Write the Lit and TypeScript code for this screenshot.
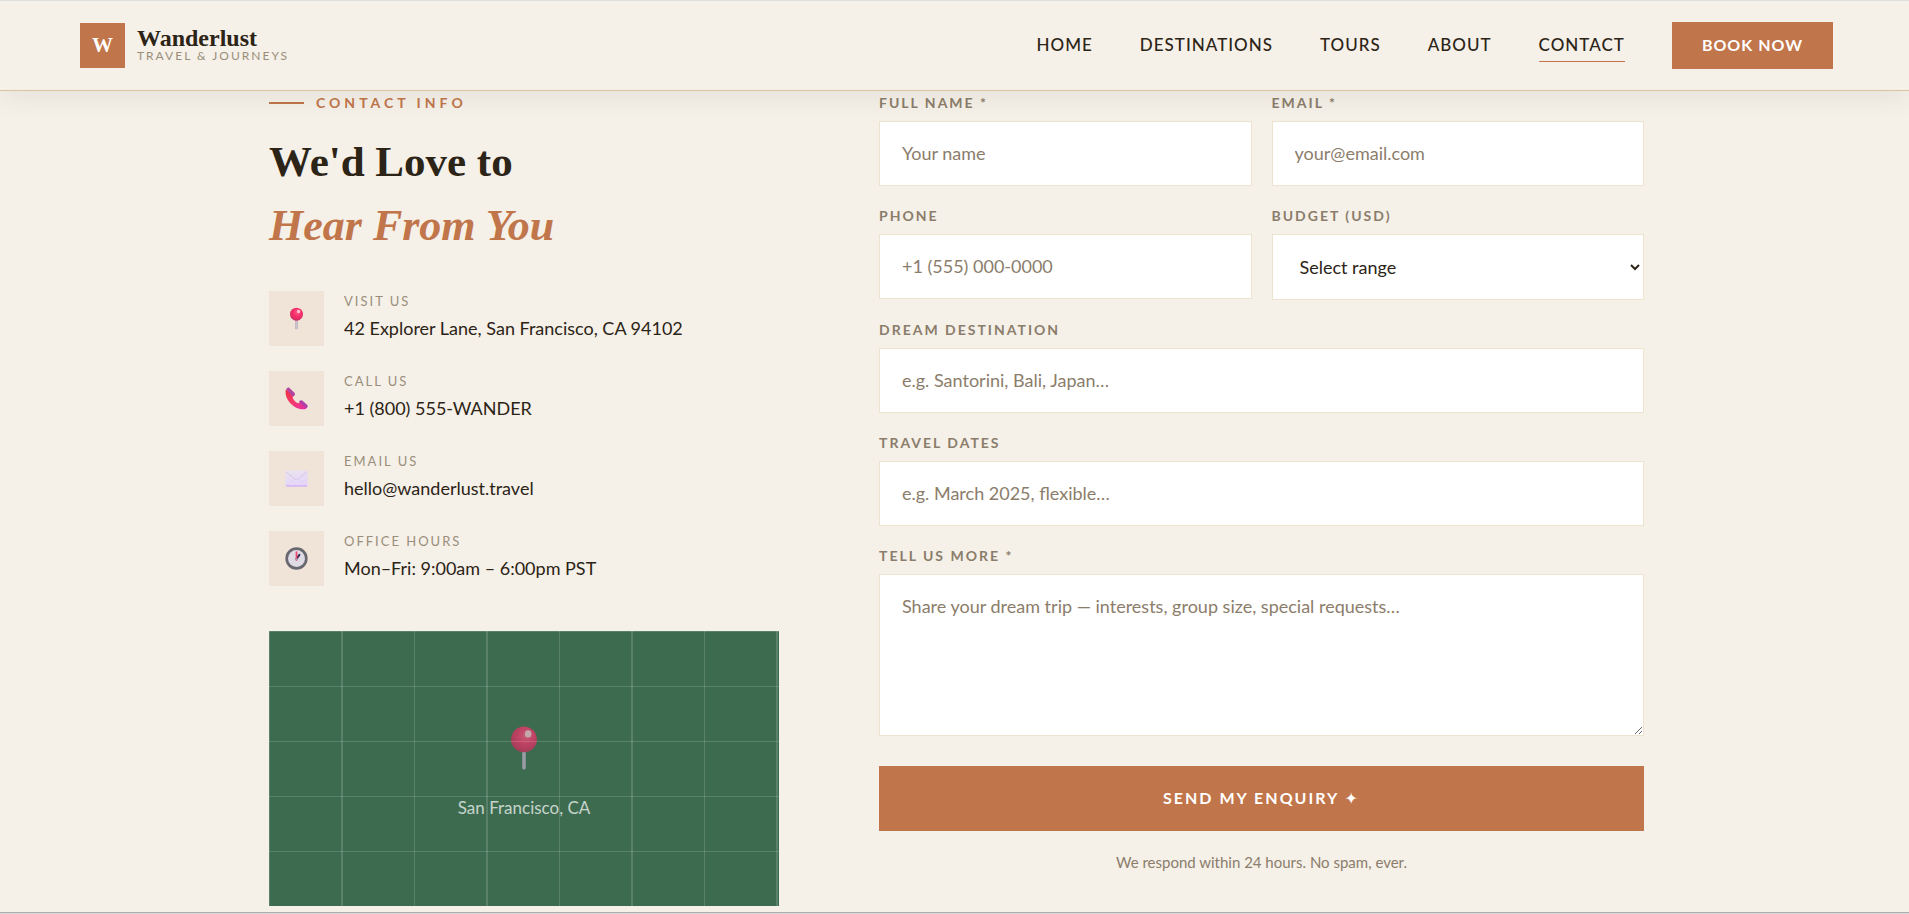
import { LitElement, html, css, svg } from "lit";
import { customElement } from "lit/decorators.js";

const pin = svg`
  <defs>
    <radialGradient id="ball" cx="0.58" cy="0.35" r="0.7">
      <stop offset="0" stop-color="#ff5a86"></stop>
      <stop offset="0.45" stop-color="#f8316c"></stop>
      <stop offset="1" stop-color="#c92a5c"></stop>
    </radialGradient>
    <linearGradient id="needle" x1="0" x2="1" y1="0" y2="0">
      <stop offset="0" stop-color="#9a90a6"></stop>
      <stop offset="0.5" stop-color="#c9c3d3"></stop>
      <stop offset="1" stop-color="#998fa5"></stop>
    </linearGradient>
  </defs>
  <rect x="14.6" y="16" width="2.8" height="15" rx="1.2" fill="url(#needle)"></rect>
  <circle cx="16" cy="10" r="9" fill="url(#ball)"></circle>
  <ellipse cx="18.9" cy="6.2" rx="2.3" ry="2.5" fill="#ffd0dc" opacity="0.9"></ellipse>`;

const phone = svg`
  <defs>
    <linearGradient id="handset" x1="0" y1="0" x2="1" y2="1">
      <stop offset="0" stop-color="#f02d3f"></stop>
      <stop offset="0.5" stop-color="#f33a6c"></stop>
      <stop offset="1" stop-color="#e62cae"></stop>
    </linearGradient>
  </defs>
  <path d="M1.200 3.500C.2 8.500 1 15 6.500 21.500C12.500 28.500 21 32.500 29 30.500L31 27.500L22 20L18.500 22.500C15 21.500 11.500 18 10.500 14.500L12.500 11Z" fill="url(#handset)"></path>
  <path d="M1.600 3.200Q3 0 5.500 .8L13.500 8.500Q15 11 12.500 12.500Q10.500 13.500 9.500 12Z" fill="#b344a0"></path>
  <path d="M19.500 20.500Q21 17.500 24 18.800L31 25Q32.500 27 30.500 29Q28.500 29.800 27.500 28Z" fill="#b03fa8"></path>`;

const envelope = svg`
  <defs>
    <linearGradient id="paper" x1="0" y1="0" x2="0.3" y2="1">
      <stop offset="0" stop-color="#e9e4ee"></stop>
      <stop offset="1" stop-color="#e6d5fa"></stop>
    </linearGradient>
  </defs>
  <rect x="0.500" y="5" width="31" height="22" rx="1.800" fill="url(#paper)"></rect>
  <path d="M1 26L13.500 16.500M31 26L18.500 16.500" stroke="#dccff0" stroke-width="1" fill="none"></path>
  <path d="M1 6.500L14 17Q16 18.500 18 17L31 6.500" stroke="#d2c5e4" stroke-width="1.200" fill="none"></path>
  <path d="M1.500 26.400H30.500" stroke="#ccaaf4" stroke-width="1.600"></path>`;

const clock = svg`
  <circle cx="16" cy="16" r="15.500" fill="#68666f"></circle>
  <circle cx="16" cy="16" r="11.800" fill="#dedbe4"></circle>
  <path d="M16 16.500L20 11" stroke="#342b52" stroke-width="2.800" stroke-linecap="round"></path>
  <path d="M16 18V7" stroke="#f0456e" stroke-width="2.400" stroke-linecap="round"></path>
  <circle cx="16" cy="17" r="1.500" fill="#a9a2b4"></circle>`;

const contacts = [
  { icon: pin, label: "Visit Us", value: "42 Explorer Lane, San Francisco, CA 94102" },
  { icon: phone, label: "Call Us", value: "+1 (800) 555-WANDER" },
  { icon: envelope, label: "Email Us", value: "hello@wanderlust.travel" },
  { icon: clock, label: "Office Hours", value: "Mon–Fri: 9:00am – 6:00pm PST" },
];

@customElement("site-header")
export class SiteHeader extends LitElement {
  static styles = css`
    :host {
      display: block;
      position: sticky;
      top: 0;
      z-index: 1;
    }
    .bar {
      display: flex;
      align-items: center;
      justify-content: space-between;
      height: 89px;
      padding: 0 76px 0 80px;
      background: #f5f0e8;
      border-top: 1px solid #dfe0dc;
      border-bottom: 1px solid #d4c5a0;
      box-shadow: 0 4px 32px rgba(44, 36, 22, 0.08);
    }
    .brand {
      display: flex;
      align-items: center;
      gap: 12px;
      color: #2c2416;
      text-decoration: none;
    }
    .mark {
      display: grid;
      place-items: center;
      width: 45px;
      height: 45px;
      background: #c1754a;
      color: #fff;
      font: 700 21px/1 "Liberation Serif", serif;
    }
    .names {
      display: flex;
      flex-direction: column;
    }
    .name {
      font: 700 24px/20px "Liberation Serif", serif;
    }
    .tag {
      color: #9a8e7b;
      font-size: 12px;
      line-height: 16px;
      letter-spacing: 2px;
      text-transform: uppercase;
    }
    .nav {
      display: flex;
      align-items: center;
      gap: 47px;
    }
    .link {
      padding: 4px 0;
      border-bottom: 1px solid transparent;
      color: #2c2416;
      font-size: 17px;
      font-weight: 500;
      line-height: 24px;
      letter-spacing: 1px;
      text-decoration: none;
      text-transform: uppercase;
    }
    .current {
      border-bottom-color: #c1754a;
    }
    .book {
      height: 47px;
      padding: 0 30px 2px;
      border: 0;
      background: #c1754a;
      color: #fff;
      font: inherit;
      font-size: 16px;
      font-weight: 700;
      letter-spacing: 1px;
      text-transform: uppercase;
    }
  `;

  render() {
    return html`
      <header class="bar">
        <a class="brand" href="#home">
          <span class="mark">W</span>
          <span class="names">
            <span class="name">Wanderlust</span>
            <span class="tag">Travel &amp; Journeys</span>
          </span>
        </a>
        <nav class="nav" aria-label="Main">
          <a class="link" href="#home">Home</a>
          <a class="link" href="#destinations">Destinations</a>
          <a class="link" href="#tours">Tours</a>
          <a class="link" href="#about">About</a>
          <a class="link current" href="#contact" aria-current="page">Contact</a>
          <button class="book" type="button">Book Now</button>
        </nav>
      </header>
    `;
  }
}

@customElement("contact-info")
export class ContactInfo extends LitElement {
  static styles = css`
    :host {
      display: block;
    }
    .eyebrow {
      display: flex;
      align-items: center;
      gap: 12px;
      margin: 0;
      color: #c1754a;
      font-size: 14px;
      font-weight: 700;
      line-height: 20px;
      letter-spacing: 4px;
      text-transform: uppercase;
    }
    .rule {
      width: 35px;
      height: 2px;
      background: #c1754a;
    }
    .title {
      margin: 17px 0 33px;
      color: #2c2416;
      font: 700 43px/64px "Liberation Serif", serif;
    }
    .accent {
      display: block;
      color: #c1754a;
      font-size: 44px;
    }
    .list {
      display: grid;
      gap: 25px;
      margin: 0 0 45px;
      padding: 0;
      list-style: none;
    }
    .item {
      display: flex;
      gap: 20px;
    }
    .tile {
      display: grid;
      place-items: center;
      width: 55px;
      height: 55px;
      background: #f0e4d8;
    }
    .glyph {
      width: 23px;
      height: 23px;
    }
    .text {
      display: flex;
      flex-direction: column;
      gap: 4px;
    }
    .label {
      color: #9a8e7b;
      font-size: 13px;
      line-height: 20px;
      letter-spacing: 2px;
      text-transform: uppercase;
    }
    .value {
      color: #2c2416;
      font-size: 18px;
      line-height: 26px;
    }
    .map {
      position: relative;
      display: flex;
      flex-direction: column;
      align-items: center;
      justify-content: center;
      gap: 24px;
      box-sizing: border-box;
      height: 275px;
      padding-top: 9px;
      background: #3d6b4f;
      color: #fff;
    }
    .map::after {
      content: "";
      position: absolute;
      inset: 0;
      background:
        repeating-linear-gradient(90deg, #ffffff26 0 1px, transparent 1px 72px, #ffffff26 72px 74px, transparent 74px 145px),
        repeating-linear-gradient(#ffffff26 0 1px, transparent 1px 55px);
    }
    .marker {
      width: 46px;
      height: 46px;
      opacity: 0.7;
    }
    .place {
      font-size: 17px;
      line-height: 26px;
      opacity: 0.7;
    }
  `;

  render() {
    return html`
      <p class="eyebrow"><span class="rule"></span>Contact Info</p>
      <h2 class="title">We'd Love to <em class="accent">Hear From You</em></h2>
      <ul class="list">
        ${contacts.map(
          (c) => html`
            <li class="item">
              <span class="tile"><svg class="glyph" viewBox="0 0 32 32" aria-hidden="true">${c.icon}</svg></span>
              <span class="text">
                <span class="label">${c.label}</span>
                <span class="value">${c.value}</span>
              </span>
            </li>
          `
        )}
      </ul>
      <div class="map">
        <svg class="marker" viewBox="0 0 32 32" aria-hidden="true">${pin}</svg>
        <span class="place">San Francisco, CA</span>
      </div>
    `;
  }
}

@customElement("enquiry-form")
export class EnquiryForm extends LitElement {
  static styles = css`
    :host {
      display: block;
    }
    .form {
      display: grid;
      gap: 20px;
    }
    .pair {
      display: grid;
      grid-template-columns: 1fr 1fr;
      align-items: start;
      gap: 20px;
    }
    .field {
      display: grid;
      gap: 8px;
    }
    .label {
      color: #8b7d6b;
      font-size: 14px;
      font-weight: 700;
      line-height: 20px;
      letter-spacing: 2px;
      text-transform: uppercase;
    }
    .control {
      box-sizing: border-box;
      width: 100%;
      height: 65px;
      margin: 0;
      padding: 0 22px 2px;
      border: 1px solid #ede4d0;
      border-radius: 0;
      background: #fff;
      color: #2c2416;
      font: inherit;
      font-size: 18px;
      outline: none;
    }
    .control::placeholder {
      color: #8b7d6b;
      opacity: 1;
    }
    .select {
      height: 66px;
      padding: 0 0 0 23px;
    }
    .area {
      display: block;
      height: 162px;
      padding: 18px 22px;
      line-height: 26px;
      resize: vertical;
    }
    .send {
      height: 65px;
      margin-top: 10px;
      padding: 0 22px 2px;
      border: 0;
      background: #c1754a;
      color: #fff;
      font: inherit;
      font-size: 16px;
      font-weight: 700;
      letter-spacing: 2px;
      text-transform: uppercase;
    }
    .note {
      margin: 0;
      color: #8b7d6b;
      font-size: 15px;
      line-height: 22px;
      text-align: center;
    }
  `;

  render() {
    return html`
      <form class="form">
        <div class="pair">
          <div class="field">
            <label class="label" for="name">Full Name *</label>
            <input class="control" id="name" type="text" placeholder="Your name" />
          </div>
          <div class="field">
            <label class="label" for="email">Email *</label>
            <input class="control" id="email" type="email" placeholder="your@email.com" />
          </div>
        </div>
        <div class="pair">
          <div class="field">
            <label class="label" for="phone">Phone</label>
            <input class="control" id="phone" type="tel" placeholder="+1 (555) 000-0000" />
          </div>
          <div class="field">
            <label class="label" for="budget">Budget (USD)</label>
            <select class="control select" id="budget">
              <option>Select range</option>
            </select>
          </div>
        </div>
        <div class="field">
          <label class="label" for="destination">Dream Destination</label>
          <input class="control" id="destination" type="text" placeholder="e.g. Santorini, Bali, Japan…" />
        </div>
        <div class="field">
          <label class="label" for="dates">Travel Dates</label>
          <input class="control" id="dates" type="text" placeholder="e.g. March 2025, flexible…" />
        </div>
        <div class="field">
          <label class="label" for="message">Tell Us More *</label>
          <textarea class="control area" id="message" placeholder="Share your dream trip — interests, group size, special requests…"></textarea>
        </div>
        <button class="send" type="button">Send My Enquiry ✦</button>
        <p class="note">We respond within 24 hours. No spam, ever.</p>
      </form>
    `;
  }
}

@customElement("app-root")
export class AppRoot extends LitElement {
  static styles = css`
    :host {
      display: flex;
      flex-direction: column;
      min-height: 100vh;
      background: #f5f0e8;
      font-family: Lato, "DejaVu Sans", sans-serif;
    }
    .main {
      display: grid;
      grid-template-columns: 2fr 3fr;
      align-items: start;
      gap: 100px;
      box-sizing: border-box;
      width: 100%;
      max-width: 1379px;
      margin: 0 auto;
      padding: 2px 0 6px 4px;
      flex: 1;
    }
    .edge {
      height: 1px;
      border-top: 1px solid #adadaf;
      background: #dcdbdc;
    }
  `;

  render() {
    return html`
      <site-header></site-header>
      <main class="main">
        <contact-info></contact-info>
        <enquiry-form></enquiry-form>
      </main>
      <div class="edge"></div>
    `;
  }
}
